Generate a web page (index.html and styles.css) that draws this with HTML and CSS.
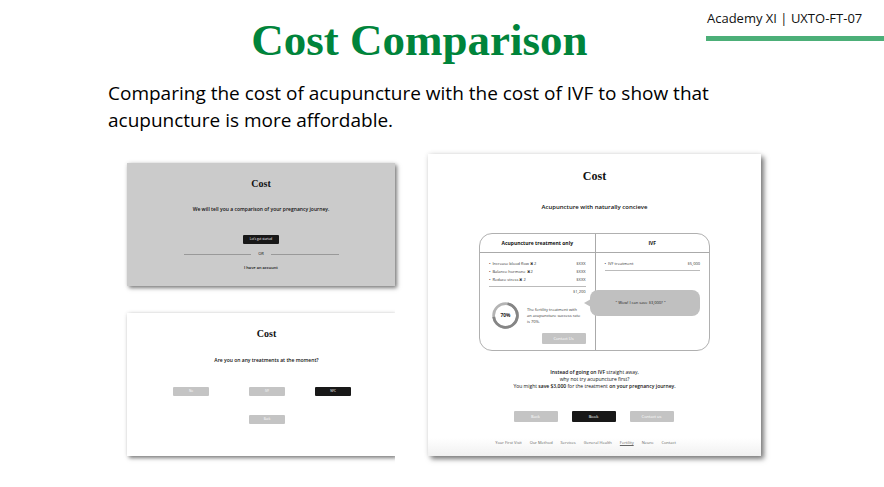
FILE: index.html
```html
<!DOCTYPE html>
<html lang="en">
<head>
<meta charset="utf-8">
<title>Cost Comparison</title>
<link rel="stylesheet" href="styles.css">
</head>
<body>
<header class="top">
  <h1>Cost Comparison</h1>
  <p class="tag">Academy XI | UXTO-FT-07</p>
</header>
<p class="intro">Comparing the cost of acupuncture with the cost of IVF to show that acupuncture is more affordable.</p>
<main class="boards">
  <div class="left">
    <section class="card start">
      <h2>Cost</h2>
      <p class="lead">We will tell you a comparison of your pregnancy journey.</p>
      <button class="btn dark" type="button">Let's get started</button>
      <div class="or"><span>OR</span></div>
      <a class="account" href="#">I have an account</a>
    </section>
    <section class="card question">
      <h2>Cost</h2>
      <p class="lead">Are you on any treatments at the moment?</p>
      <div class="choices">
        <button class="btn" type="button">No</button>
        <button class="btn" type="button">IVF</button>
        <button class="btn dark" type="button">NFC</button>
        <button class="btn back" type="button">Back</button>
      </div>
    </section>
  </div>
  <section class="card result">
    <h2>Cost</h2>
    <p class="lead">Acupuncture with naturally concieve</p>
    <table>
      <thead><tr><th>Acupuncture treatment only</th><th>IVF</th></tr></thead>
      <tbody><tr>
        <td>
          <ul class="prices">
            <li><span>•&ensp;Increase blood flow ✖ 2</span><span>$XXX</span></li>
            <li><span>•&ensp;Balance hormone ✖ 2</span><span>$XXX</span></li>
            <li><span>•&ensp;Reduce stress ✖ 2</span><span>$XXX</span></li>
          </ul>
          <p class="total">$1,200</p>
          <div class="rate">
            <svg class="ring" viewBox="0 0 30 30" aria-hidden="true">
              <circle cx="15" cy="15" r="12.3" fill="none" stroke="#b4b4b4" stroke-width="2.8"/>
              <circle cx="15" cy="15" r="12.3" fill="none" stroke="#858585" stroke-width="2.8" stroke-dasharray="54 24" transform="rotate(-80 15 15)"/>
              <text x="15" y="17" text-anchor="middle">70%</text>
            </svg>
            <p>The fertility treatment with<br>an acupuncture success rate<br>is 70%.</p>
          </div>
          <button class="btn contact" type="button">Contact Us</button>
        </td>
        <td>
          <ul class="prices">
            <li><span>•&ensp;IVF treatment</span><span>$5,000</span></li>
          </ul>
          <p class="bubble">" Wow! I can save $3,000? "</p>
        </td>
      </tr></tbody>
    </table>
    <p class="advice"><b>Instead of going on IVF</b> straight away,<br>why not try acupuncture first?<br>You might <b>save $3,000</b> for the treatment <b>on your pregnancy journey.</b></p>
    <div class="actions">
      <button class="btn" type="button">Back</button>
      <button class="btn dark" type="button">Book</button>
      <button class="btn" type="button">Contact us</button>
    </div>
    <nav>
      <a href="#">Your First Visit</a><a href="#">Our Method</a><a href="#">Services</a><a href="#">General Health</a><a class="current" href="#">Fertility</a><a href="#">Neuro</a><a href="#">Contact</a>
    </nav>
  </section>
</main>
</body>
</html>
```
FILE: styles.css
```css
* { box-sizing: border-box; }
body, h1, h2, p, ul { margin: 0; padding: 0; }
body { background: #fff; color: #111; font-family: "Open Sans", sans-serif; }
a { color: inherit; text-decoration: none; }

.top { display: grid; grid-template-columns: 1fr 178px; align-items: start; }
h1 {
  padding: 14px 0 0 133px;
  color: #00843b;
  font: bold 45px/52px "Liberation Serif", serif;
  text-align: center;
}
.tag {
  padding: 8px 0 7px 1px;
  border-bottom: 5px solid #4caf78;
  font-size: 13px;
  line-height: 21px;
}
.intro { padding: 14px 160px 0 108px; font-size: 19px; line-height: 27px; color: #000; }

.boards {
  display: grid;
  grid-template-columns: 268fr 333fr;
  gap: 33px;
  align-items: start;
  padding: 20px 123px 24px 127px;
  font: 5px/6px "Open Sans", sans-serif;
}
.left { display: grid; gap: 27px; padding-top: 9px; }
.card {
  display: flex;
  flex-direction: column;
  align-items: center;
  box-shadow: 2px 2px 4px rgba(0, 0, 0, .5), 0 0 4px rgba(0, 0, 0, .08);
}
h2 { font: bold 10px/12px "Liberation Serif", serif; }
.lead { font-weight: 600; }

.btn {
  width: 36px;
  height: 9px;
  padding: 0;
  border: 0;
  border-radius: 1px;
  background: #c4c4c4;
  color: #fff;
  font: 3px/9px "Open Sans", sans-serif;
  text-align: center;
}
.btn.dark { background: #181818; }

.start { padding: 15px 0 15px; background: #cbcbcb; }
.start .lead { margin: 16px 0 23px; }
.or {
  display: flex;
  align-items: center;
  gap: 7px;
  width: 155px;
  margin: 7px 0 8px;
  font-size: 4px;
}
.or::before, .or::after { content: ""; flex: 1; height: 1px; background: #999; }
.account { font-size: 4px; font-weight: 600; }

.question { padding: 15px 0 32px 11px; clip-path: inset(-10px 0 -10px -10px); }
.question .lead { margin: 17px 0 24px; }
.choices {
  display: grid;
  grid-template-columns: 76px 66px 36px;
  row-gap: 19px;
  align-self: flex-start;
  margin-left: 35px;
}
.choices .back { grid-column: 2; }

.result {
  padding: 16px 0 10px;
  background: linear-gradient(#fff 94%, #f0f0f0);
  box-shadow: 3px 3px 5px rgba(0, 0, 0, .5), 0 0 5px rgba(0, 0, 0, .1);
}
.result h2 { font-size: 12px; }
.result .lead { margin: 22px 0 23px; font-size: 6px; }
table {
  width: 231px;
  height: 118px;
  border: 1px solid #b0b0b0;
  border-radius: 13px;
  border-spacing: 0;
  table-layout: fixed;
}
th, td { padding: 0; }
th { height: 19px; border-bottom: 1px solid #aaa; font-size: 5px; }
th + th, td + td { border-left: 1px solid #aaa; }
td { position: relative; padding: 7px 9px 0; vertical-align: top; color: #333; font-size: 4px; }
.prices { padding-bottom: 2px; border-bottom: 1px solid #bbb; list-style: none; }
.prices li { display: flex; justify-content: space-between; height: 8px; line-height: 8px; }
.total { padding-top: 1px; text-align: right; line-height: 8px; }
.rate { display: flex; align-items: center; gap: 7px; padding: 5px 0 0 2px; white-space: nowrap; }
.ring { width: 29px; height: 29px; flex: none; }
.ring text { font: bold 5px "Open Sans", sans-serif; fill: #222; }
.contact { display: block; width: 44px; height: 11px; margin: 3px 0 0 auto; font-size: 4px; }
.bubble {
  position: absolute;
  left: -6px;
  top: 37px;
  width: 110px;
  padding-right: 8px;
  border-radius: 8px;
  background: #c0c0c0;
  color: #222;
  line-height: 26px;
  text-align: center;
}
.bubble::before {
  content: "";
  position: absolute;
  left: -6px;
  top: 9px;
  border: 4px solid transparent;
  border-left: 0;
  border-right: 7px solid #c0c0c0;
}
.advice { margin-top: 18px; line-height: 7px; text-align: center; }
.advice b { font-weight: 600; }
.actions { display: flex; gap: 14px; margin: 21px 18px 18px 16px; }
.actions .btn { width: 44px; height: 11px; font-size: 4px; }
nav { display: flex; gap: 8px; margin-right: 18px; color: #666; font-size: 4px; }
.current { text-decoration: underline; }
```
